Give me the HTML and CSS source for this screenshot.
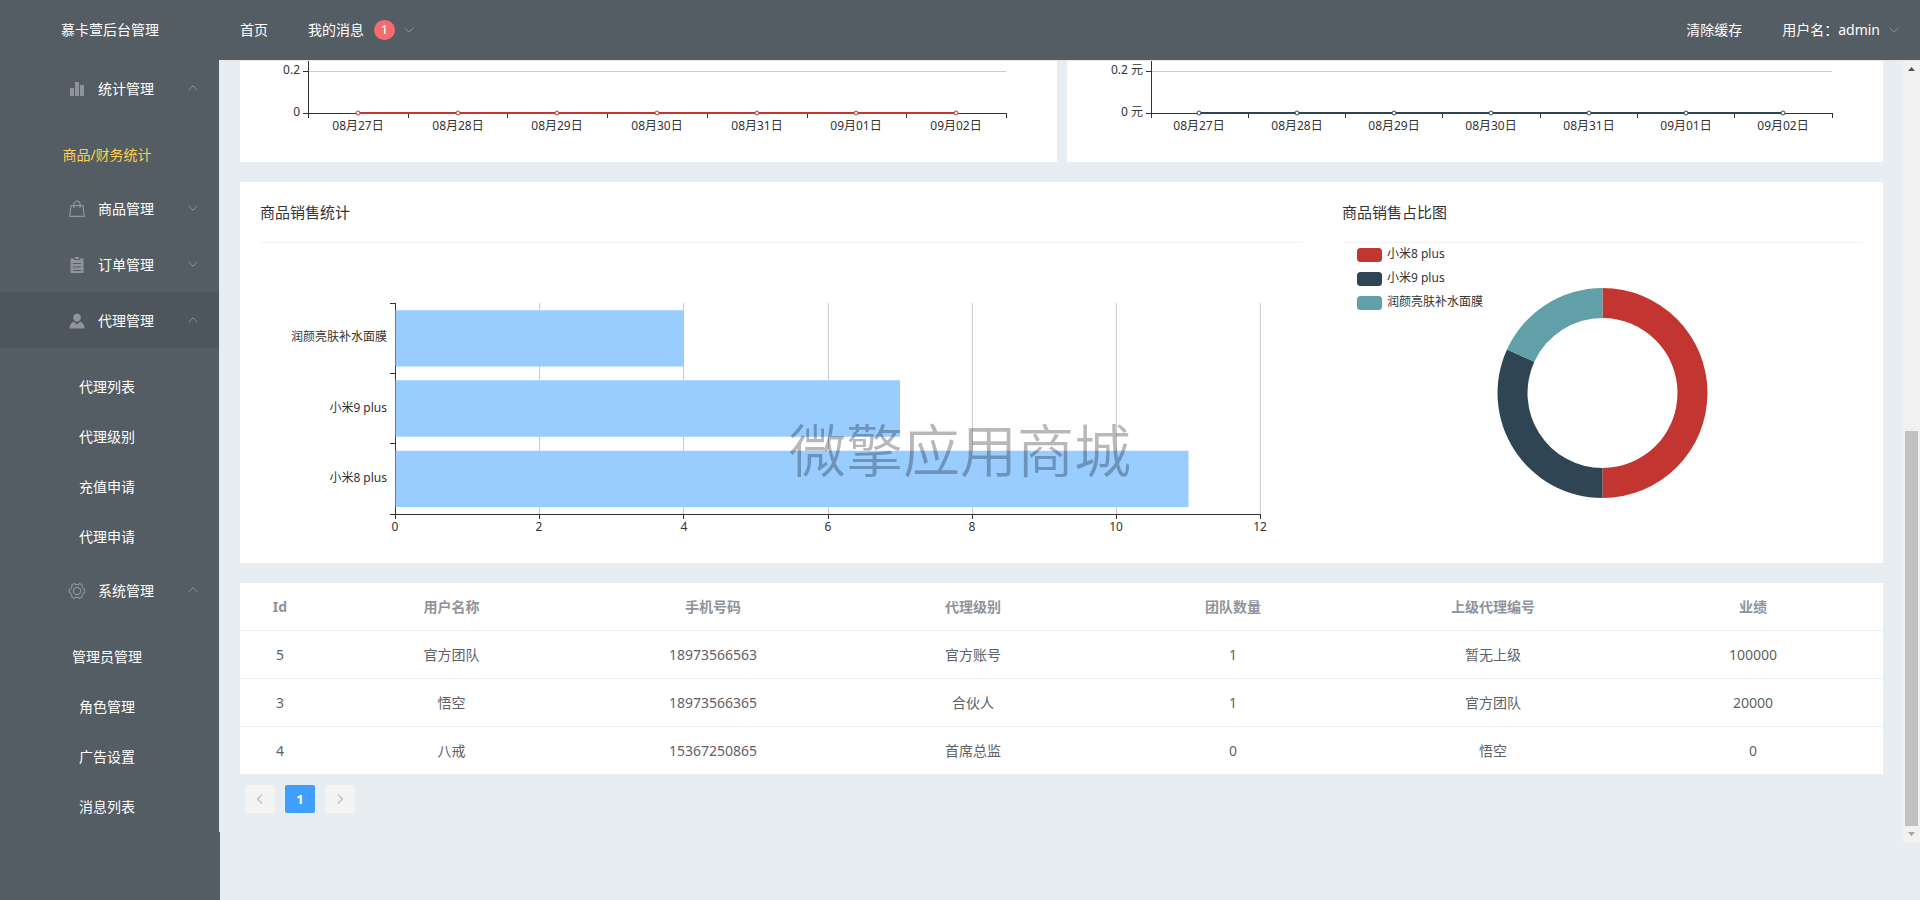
FILE: index.html
```html
<!DOCTYPE html>
<html lang="zh-CN">
<head>
<meta charset="utf-8">
<title>慕卡萱后台管理</title>
<link rel="stylesheet" href="styles.css">
</head>
<body>
<svg class="defs" aria-hidden="true">
  <symbol id="down" viewBox="0 0 12 12"><path d="M1.5 3.8 6 8.2l4.500-4.400" fill="none" stroke="currentColor"/></symbol>
  <symbol id="up" viewBox="0 0 12 12"><path d="M1.500 8.200 6 3.800l4.500 4.400" fill="none" stroke="currentColor"/></symbol>
</svg>

<header class="header">
  <div class="brand">慕卡萱后台管理</div>
  <nav class="topnav">
    <a class="toplink" href="#">首页</a>
    <button class="toplink" type="button">我的消息<span class="badge">1</span><svg class="arrow"><use href="#down"/></svg></button>
  </nav>
  <nav class="topnav topnav-end">
    <a class="toplink" href="#">清除缓存</a>
    <button class="toplink" type="button">用户名：admin<svg class="arrow"><use href="#down"/></svg></button>
  </nav>
</header>

<div class="body">
  <aside class="aside">
    <nav class="menu">
      <button class="menu-title" type="button">
        <svg class="icon" viewBox="0 0 18 18"><path fill="currentColor" d="M2 8h4v8H2zM7 2h4v14H7zM12 5h4v11h-4z"/></svg>
        <span>统计管理</span><svg class="arrow"><use href="#up"/></svg>
      </button>
      <div class="submenu"><a class="menu-item active" href="#">商品/财务统计</a></div>

      <button class="menu-title" type="button">
        <svg class="icon" viewBox="0 0 18 18" fill="none" stroke="currentColor" stroke-width="1.200"><path d="M3 5.600h12l1.300 10.800H1.700zM6 8V4.200a3 3 0 0 1 6 0V8"/></svg>
        <span>商品管理</span><svg class="arrow"><use href="#down"/></svg>
      </button>
      <button class="menu-title" type="button">
        <svg class="icon" viewBox="0 0 18 18"><path fill="currentColor" fill-rule="evenodd" d="M2.500 2.500H6V4h6V2.500h3.500V17h-13zM5 7v1h8V7zm0 3.500v1h8v-1zM5 14v1h8v-1zM7 1h4v2H7z"/></svg>
        <span>订单管理</span><svg class="arrow"><use href="#down"/></svg>
      </button>
      <button class="menu-title hover" type="button">
        <svg class="icon" viewBox="0 0 18 18"><path fill="currentColor" d="M9 1.500a4 4 0 0 1 2.300 7.200L9 10 6.700 8.700A4 4 0 0 1 9 1.500zM5.600 9.600 9 12.500l3.400-2.900c2.500 1.200 4.100 3.700 4.300 7H1.300c.2-3.300 1.800-5.800 4.300-7z"/></svg>
        <span>代理管理</span><svg class="arrow"><use href="#up"/></svg>
      </button>
      <div class="submenu">
        <a class="menu-item" href="#">代理列表</a>
        <a class="menu-item" href="#">代理级别</a>
        <a class="menu-item" href="#">充值申请</a>
        <a class="menu-item" href="#">代理申请</a>
      </div>

      <button class="menu-title" type="button">
        <svg class="icon" viewBox="0 0 18 18" fill="none" stroke="currentColor" stroke-width="1.100" stroke-linejoin="round"><path d="M6.400 1.400 7.600 2.600h2.800l1.200-1.200 2.700 1.500-.3 1.900 1.200 1.900 1.500.8v3l-1.500.8-1.200 1.900.3 1.900-2.700 1.500-1.200-1.200H7.600l-1.200 1.200-2.700-1.500.3-1.900-1.200-1.900-1.500-.8v-3l1.500-.8L4 4.800l-.3-1.900z"/><circle cx="9" cy="9" r="3.600"/></svg>
        <span>系统管理</span><svg class="arrow"><use href="#up"/></svg>
      </button>
      <div class="submenu">
        <a class="menu-item" href="#">管理员管理</a>
        <a class="menu-item" href="#">角色管理</a>
        <a class="menu-item" href="#">广告设置</a>
        <a class="menu-item" href="#">消息列表</a>
      </div>
    </nav>
  </aside>

  <div class="viewport">
    <main class="main">
      <div class="trends">
        <section class="card">
          <svg class="chart" viewBox="0 0 817 101">
            <path class="grid" d="M69 10.500h697"/>
            <path class="axis" d="M68.500 0v57M63 10.500h5M63 52.500h704M168.500 53v4M267.500 53v4M367.500 53v4M467.500 53v4M567.500 53v4M666.500 53v4M766.500 53v4"/>
            <g class="tick end"><text x="60" y="13">0.2</text><text x="60" y="55">0</text></g>
            <path class="line red" d="M118 52h598"/>
            <g class="dots red"><circle cx="118" cy="52" r="2"/><circle cx="218" cy="52" r="2"/><circle cx="317" cy="52" r="2"/><circle cx="417" cy="52" r="2"/><circle cx="517" cy="52" r="2"/><circle cx="616" cy="52" r="2"/><circle cx="716" cy="52" r="2"/></g>
            <g class="tick mid"><text x="118" y="69">08月27日</text><text x="218" y="69">08月28日</text><text x="317" y="69">08月29日</text><text x="417" y="69">08月30日</text><text x="517" y="69">08月31日</text><text x="616" y="69">09月01日</text><text x="716" y="69">09月02日</text></g>
          </svg>
        </section>
        <section class="card">
          <svg class="chart" viewBox="0 0 816 101">
            <path class="grid" d="M85 10.500h680"/>
            <path class="axis" d="M84.500 0v57M79 10.500h5M79 52.500h687M181.500 53v4M278.500 53v4M375.500 53v4M473.500 53v4M570.500 53v4M667.500 53v4M765.500 53v4"/>
            <g class="tick end"><text x="76" y="13">0.2 元</text><text x="76" y="55">0 元</text></g>
            <path class="line navy" d="M132 52h584"/>
            <g class="dots navy"><circle cx="132" cy="52" r="2"/><circle cx="230" cy="52" r="2"/><circle cx="327" cy="52" r="2"/><circle cx="424" cy="52" r="2"/><circle cx="522" cy="52" r="2"/><circle cx="619" cy="52" r="2"/><circle cx="716" cy="52" r="2"/></g>
            <g class="tick mid"><text x="132" y="69">08月27日</text><text x="230" y="69">08月28日</text><text x="327" y="69">08月29日</text><text x="424" y="69">08月30日</text><text x="522" y="69">08月31日</text><text x="619" y="69">09月01日</text><text x="716" y="69">09月02日</text></g>
          </svg>
        </section>
      </div>

      <section class="card sales">
        <div>
          <h2 class="card-title">商品销售统计</h2>
          <svg class="chart" viewBox="0 0 1042 300">
            <path class="grid" d="M279.500 60v211M423.500 60v211M568.500 60v211M712.500 60v211M856.500 60v211M1000.500 60v211"/>
            <path class="axis" d="M135.500 60v216M130 60.500h5M130 130.500h5M130 200.500h5M130 271.500h871M279.500 272v4M423.500 272v4M568.500 272v4M712.500 272v4M856.500 272v4M1000.500 272v4"/>
            <path class="bar" d="M135.500 67.200h288.500v56.300H135.500zM135.500 137.300h504.500v56.500H135.500zM135.500 207.700h793v56.300H135.500z"/>
            <g class="tick end"><text x="127" y="98">润颜亮肤补水面膜</text><text x="127" y="169">小米9 plus</text><text x="127" y="239">小米8 plus</text></g>
            <g class="tick mid"><text x="135" y="288">0</text><text x="279" y="288">2</text><text x="424" y="288">4</text><text x="568" y="288">6</text><text x="712" y="288">8</text><text x="856" y="288">10</text><text x="1000" y="288">12</text></g>
          </svg>
        </div>
        <div>
          <h2 class="card-title">商品销售占比图</h2>
          <svg class="chart" viewBox="0 0 521 300">
            <g transform="translate(260.500 150)">
              <path fill="#c23531" d="M0-105A105 105 0 0 1 0 105V75A75 75 0 0 0 0-75z"/>
              <path fill="#2f4554" d="M0 105A105 105 0 0 1-95.500-43.600L-68.200-31.200A75 75 0 0 0 0 75z"/>
              <path fill="#61a0a8" d="M-95.500-43.600A105 105 0 0 1 0-105V-75A75 75 0 0 0-68.200-31.200z"/>
            </g>
            <rect x="15" y="5" width="25" height="14" rx="3.500" fill="#c23531"/>
            <rect x="15" y="29" width="25" height="14" rx="3.500" fill="#2f4554"/>
            <rect x="15" y="53" width="25" height="14" rx="3.500" fill="#61a0a8"/>
            <g class="tick"><text x="45" y="15">小米8 plus</text><text x="45" y="39">小米9 plus</text><text x="45" y="63">润颜亮肤补水面膜</text></g>
          </svg>
        </div>
      </section>

      <table class="table">
        <colgroup><col class="col-id"><col class="col-name"><col><col><col><col><col></colgroup>
        <thead>
          <tr><th>Id</th><th>用户名称</th><th>手机号码</th><th>代理级别</th><th>团队数量</th><th>上级代理编号</th><th>业绩</th></tr>
        </thead>
        <tbody>
          <tr><td>5</td><td>官方团队</td><td>18973566563</td><td>官方账号</td><td>1</td><td>暂无上级</td><td>100000</td></tr>
          <tr><td>3</td><td>悟空</td><td>18973566365</td><td>合伙人</td><td>1</td><td>官方团队</td><td>20000</td></tr>
          <tr><td>4</td><td>八戒</td><td>15367250865</td><td>首席总监</td><td>0</td><td>悟空</td><td>0</td></tr>
        </tbody>
      </table>

      <nav class="pager" aria-label="分页">
        <button class="page" type="button" disabled aria-label="上一页"><svg class="arrow" viewBox="0 0 12 12"><path d="M8 1.500 3.500 6 8 10.500" fill="none" stroke="currentColor" stroke-width="1.600"/></svg></button>
        <button class="page current" type="button">1</button>
        <button class="page" type="button" disabled aria-label="下一页"><svg class="arrow" viewBox="0 0 12 12"><path d="M4 1.500 8.500 6 4 10.500" fill="none" stroke="currentColor" stroke-width="1.600"/></svg></button>
      </nav>
    </main>
    <div class="scrollbar" aria-hidden="true">
      <svg class="scroll-arrow" viewBox="0 0 17 17"><path fill="#505050" d="M5 10h7L8.500 6z"/></svg>
      <div class="track"><div class="thumb"></div></div>
      <svg class="scroll-arrow" viewBox="0 0 17 17"><path fill="#a3a3a3" d="M5 6h7l-3.500 4z"/></svg>
    </div>
  </div>
</div>
<div class="watermark">微擎应用商城</div>
</body>
</html>
```
FILE: styles.css
```css
* { box-sizing: border-box; }

body {
  margin: 0;
  min-height: 100vh;
  display: flex;
  flex-direction: column;
  background: #e8edf1;
  font: 14px/20px "Noto Sans", "Noto Sans CJK SC", sans-serif;
  color: #333;
}

button {
  font: inherit;
  color: inherit;
  border: 0;
  padding: 0;
  background: none;
  cursor: pointer;
}

a { color: inherit; text-decoration: none; }

.defs { position: absolute; width: 0; height: 0; }

.arrow { width: 12px; height: 12px; color: #909399; flex: none; }

/* Header */
.header {
  display: flex;
  height: 60px;
  background: #545c64;
  color: #fff;
}

.brand {
  width: 220px;
  text-align: center;
  line-height: 60px;
}

.topnav {
  display: flex;
  align-items: center;
  gap: 40px;
  padding: 0 20px;
}

.topnav-end { margin-left: auto; }

.toplink { display: flex; align-items: center; gap: 8px; }

.badge {
  min-width: 21px;
  height: 20px;
  margin-left: 2px;
  border-radius: 10px;
  background: #f56c6c;
  font-size: 12px;
  font-weight: 500;
  text-align: center;
}

/* Sidebar */
.body { display: flex; flex: 1; }

.aside { width: 220px; flex: none; background: #545c64; color: #fff; }

.menu { border-right: 1px solid #e6e6e6; }

.menu-title {
  display: flex;
  align-items: center;
  width: 100%;
  height: 56px;
  padding: 2px 20px 0 68px;
}

.menu-title .icon { width: 18px; height: 18px; margin-right: 12px; color: #909399; }
.menu-title .arrow { margin: 0 0 2px auto; }
.menu-title.hover { background: #4d555d; }

.submenu { padding-top: 14px; }

.menu-item {
  display: block;
  padding: 0 45px 0 40px;
  line-height: 50px;
  text-align: center;
}

.menu-item.active { color: #ffd04b; }

/* Content */
.viewport {
  display: flex;
  flex: 1;
  align-self: flex-start;
  min-width: 0;
  border-top: 1px solid #e6e6e6;
}

.main {
  display: flex;
  flex-direction: column;
  gap: 20px;
  flex: 1;
  min-width: 0;
  padding: 0 20px 30px;
}

.card { background: #fff; }

.trends { display: grid; grid-template-columns: 817fr 816fr; gap: 10px; }

.sales {
  display: grid;
  grid-template-columns: 2fr 1fr;
  gap: 40px;
  padding: 20px;
}

.card-title {
  margin: 0;
  padding-bottom: 20px;
  border-bottom: 1px solid #f2f2f2;
  font-size: 15px;
  line-height: 20px;
  font-weight: 400;
}

.chart { display: block; width: 100%; height: auto; }
.grid { stroke: #ccc; }
.axis { stroke: #333; fill: none; }
.bar { fill: #9cf; }
.tick { font-size: 12px; fill: #333; }
.end { text-anchor: end; }
.mid { text-anchor: middle; }
.line { stroke-width: 2; }
.dots { fill: #fff; stroke-width: 1; }
.red { stroke: #c23531; }
.navy { stroke: #2f4554; }

/* Table */
.table {
  width: 100%;
  table-layout: fixed;
  border-collapse: separate;
  border-spacing: 0;
  background: #fff;
  color: #606266;
  text-align: center;
}

.table th,
.table td {
  height: 48px;
  padding: 0;
  border-bottom: 1px solid #ebeef5;
}

.table th { color: #909399; font-weight: 700; }
.col-id { width: 80px; }
.col-name { width: 263px; }

/* Pagination */
.pager { display: flex; gap: 10px; margin-top: -10px; padding: 0 5px; }

.page {
  display: flex;
  align-items: center;
  justify-content: center;
  width: 30px;
  height: 28px;
  border-radius: 2px;
  background: #f4f4f5;
  font-size: 13px;
  font-weight: 700;
}

.page .arrow { color: #c0c4cc; }
.page.current { background: #409eff; color: #fff; }

/* Scrollbar */
.scrollbar { display: flex; flex-direction: column; width: 17px; background: #f1f1f1; }
.scroll-arrow { width: 17px; height: 17px; }
.track { display: flex; flex: 1; flex-direction: column; justify-content: flex-end; padding: 0 2px; }
.thumb { flex: 0 0 52.8%; background: #c1c1c1; }

.watermark {
  position: fixed;
  inset: 0;
  display: grid;
  place-items: center;
  pointer-events: none;
  color: rgba(0, 0, 0, 0.28);
  font-size: 57px;
  line-height: 60px;
  font-weight: 350;
}
```
